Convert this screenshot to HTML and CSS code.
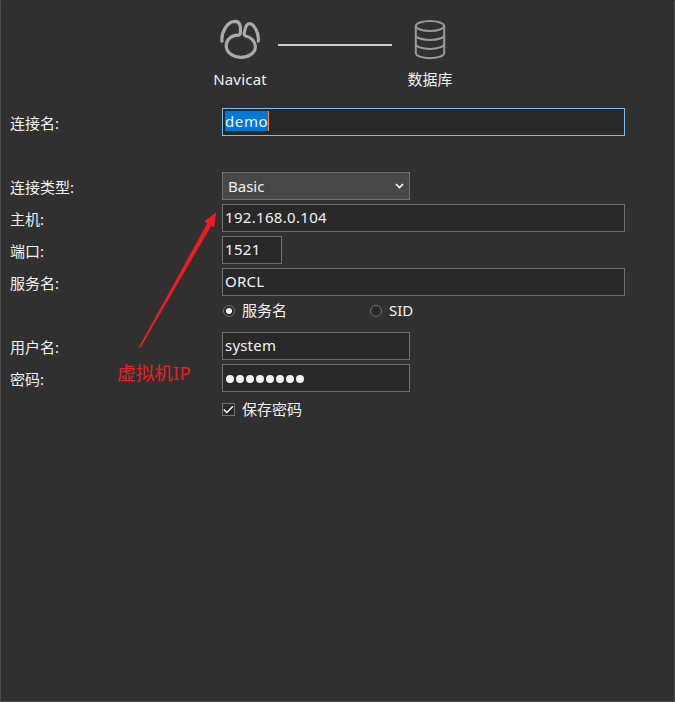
FILE: index.html
```html
<!DOCTYPE html>
<html lang="zh-CN">
<head>
<meta charset="utf-8">
<title>Navicat</title>
<link rel="stylesheet" href="styles.css">
</head>
<body>
<main class="dialog">
  <header class="route">
    <div class="endpoint">
      <svg class="logo" width="44" height="44" viewBox="0 0 44 44">
        <path d="M4 23.2C3 14.5 9 3.4 17.3 3.4C22.5 3.6 22.8 9 22.3 15.2Q22.1 17.2 19.9 17.2C12.8 17.2 8.2 22.2 8.2 27.5C8.2 34.7 15 39.3 22.7 39.3C30.7 39.3 37.4 34.8 37.4 29C37.4 23.3 32.5 18.9 27.5 18Q25.9 17.6 26.2 15.6C26.8 11.3 28.5 5.7 31.3 5.7C35.8 5.7 41.2 14.8 40.3 23.2"/>
      </svg>
      <span class="wide">Navicat</span>
    </div>
    <div class="link"></div>
    <div class="endpoint database">
      <svg class="db" width="44" height="44" viewBox="0 0 44 44">
        <ellipse cx="22" cy="8" rx="14.2" ry="5"/>
        <path d="M7.8 8V35C7.8 37.8 14 40.2 22 40.2S36.2 37.8 36.2 35V8M7.8 16.9C7.8 19.7 14 22.1 22 22.1S36.2 19.7 36.2 16.9M7.8 25.7C7.8 28.5 14 30.9 22 30.9S36.2 28.5 36.2 25.7"/>
      </svg>
      <span>数据库</span>
    </div>
  </header>
  <form class="form">
    <div class="row name-row"><label>连接名:</label><div class="field focused"><span class="selection">demo</span></div></div>
    <div class="row"><label>连接类型:</label><div class="field medium select"><span>Basic</span>
      <svg width="9" height="6" viewBox="0 0 9 6"><path d="M1 1L4.5 4.5L8 1"/></svg></div></div>
    <div class="row"><label>主机:</label><div class="field numeric">192.168.0.104</div></div>
    <div class="row"><label>端口:</label><div class="field short numeric">1521</div></div>
    <div class="row"><label>服务名:</label><div class="field wide">ORCL</div></div>
    <div class="row options"><span></span>
      <div class="option"><i class="radio checked"></i><span>服务名</span></div>
      <div class="option"><i class="radio"></i><span>SID</span></div>
    </div>
    <div class="row"><label>用户名:</label><div class="field medium wide">system</div></div>
    <div class="row"><label>密码:</label><div class="field medium password"><i></i><i></i><i></i><i></i><i></i><i></i><i></i><i></i></div></div>
    <div class="row save"><span></span>
      <div class="option"><i class="checkbox"><svg width="11" height="11" viewBox="0 0 11 11"><path d="M.8 5.5L3.8 8.5L10 2.2"/></svg></i><span>保存密码</span></div>
    </div>
  </form>
  <div class="note">
    <svg width="82" height="142" viewBox="0 0 82 142"><path class="arrow" d="M1 137L69.3 13.2L66.4 11.3L78 2.5L76.2 17.6L73.3 15.7L2.4 137.8Z"/></svg>
    <span>虚拟机IP</span>
  </div>
</main>
</body>
</html>
```
FILE: styles.css
```css
* { box-sizing: border-box; }
body {
  margin: 0;
  background: #303030;
  color: #f2f2f2;
  font: 15px/20px "Noto Sans", "Noto Sans CJK SC", sans-serif;
}
.dialog {
  position: relative;
  height: 702px;
  border: 1px solid #4b4b4b;
  border-top-color: #303030;
}
.route { display: flex; height: 107px; padding: 17px 0 0 211px; }
.endpoint { display: flex; flex-direction: column; align-items: center; width: 56px; }
.endpoint span { margin-top: 7px; }
.endpoint svg { fill: none; }
.logo { stroke: #aaa; stroke-width: 3.2; stroke-linecap: round; stroke-linejoin: round; }
.db { stroke: #999; stroke-width: 2; }
.link { width: 114px; height: 2px; margin: 26px 10px 0; background: #ccc; }
.form { display: flex; flex-direction: column; gap: 4px; padding-left: 9px; }
.row { display: flex; height: 28px; }
.row > :first-child { width: 212px; flex: none; padding-top: 5px; }
.name-row { margin-bottom: 32px; }
.field {
  width: 403px;
  padding: 2px;
  border: 1px solid #707070;
  background: #282828;
  white-space: nowrap;
}
.wide { letter-spacing: .2px; }
.focused { border-color: #7dbef1; }
.selection {
  display: inline-block;
  width: 44px;
  height: 20px;
  letter-spacing: .6px;
  background: #0078d7;
  border-right: 1px solid #ff8728;
}
.medium { width: 188px; }
.short { width: 60px; }
.numeric { letter-spacing: .32px; }
.select { display: flex; align-items: center; justify-content: space-between; padding: 0 5px; background: #484848; }
.select svg { fill: none; stroke: #fff; stroke-width: 1.6; }
.option { display: flex; align-items: center; width: 147px; height: 21px; }
.option span { margin-top: -2px; }
.radio {
  width: 12px;
  height: 12px;
  margin: 0 7px 0 1px;
  border: 1px solid #707070;
  border-radius: 50%;
  background: #282828;
}
.checked { background: radial-gradient(circle, #fff 0 2.7px, #282828 3.2px); }
.password { display: flex; align-items: center; gap: 2px; padding: 1px 3px 0; }
.password i { width: 8px; height: 8px; border-radius: 50%; background: #f2f2f2; }
.save { padding-top: 3px; }
.checkbox { display: flex; width: 13px; height: 13px; margin-right: 7px; border: 1px solid #707070; background: #282828; }
.checkbox svg { fill: none; stroke: #fff; stroke-width: 1.4; }
.note {
  position: absolute;
  left: 116px;
  top: 209px;
  color: #ed1c24;
  font-size: 18.7px;
  line-height: 26px;
}
.note svg { display: block; margin-left: 21px; }
.note span { display: block; margin-top: 8px; }
.arrow { fill: #ed1c24; }
```
